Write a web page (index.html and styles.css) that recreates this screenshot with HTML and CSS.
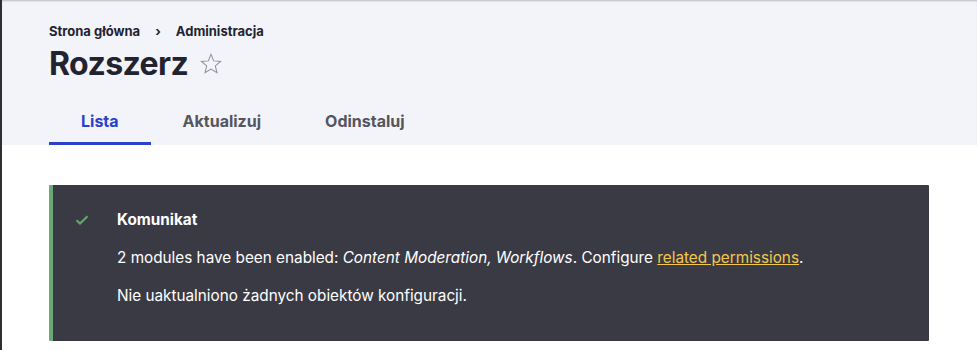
FILE: index.html
```html
<!DOCTYPE html>
<html lang="pl">
<head>
  <meta charset="UTF-8">
  <meta name="viewport" content="width=device-width, initial-scale=1.0">
  <title>Rozszerz</title>
  <link rel="stylesheet" href="styles.css">
</head>
<body>
  <!-- Page header -->
  <header class="page-header">
    <nav class="breadcrumb">
      <a href="#">Strona główna</a>
      <span class="sep">›</span>
      <a href="#">Administracja</a>
    </nav>
    <div class="title-row">
      <h1>Rozszerz</h1>
      <button class="star-btn" aria-label="Dodaj do skrótów">
        <svg width="22" height="22" viewBox="0 0 24 24">
          <polygon points="12,1.5 14.9,8.6 22.5,9.2 16.7,14.1 18.5,21.6 12,17.6 5.5,21.6 7.3,14.1 1.5,9.2 9.1,8.6" fill="none" stroke="#8e9099" stroke-width="1.1" stroke-linejoin="miter"/>
        </svg>
      </button>
    </div>
    <ul class="tabs">
      <li class="tab active"><a href="#">Lista</a></li>
      <li class="tab"><a href="#">Aktualizuj</a></li>
      <li class="tab"><a href="#">Odinstaluj</a></li>
    </ul>
  </header>

  <!-- Messages -->
  <main class="content">
    <div class="message status">
      <svg class="msg-icon" width="14" height="10" viewBox="0 0 14 10">
        <path d="M1.5 5.2 L5 8.5 L12.5 1.2" fill="none" stroke="#5ea86c" stroke-width="2.2"/>
      </svg>
      <div class="msg-body">
        <h2 class="msg-title">Komunikat</h2>
        <p>2 modules have been enabled: <em>Content Moderation, Workflows</em>. Configure <a href="#">related permissions</a>.</p>
        <p>Nie uaktualniono żadnych obiektów konfiguracji.</p>
      </div>
    </div>
  </main>
</body>
</html>
```

FILE: styles.css
```css
/* General */
body {
  margin: 0;
  font-family: Inter, "Noto Sans", sans-serif;
  color: #222330;
  background: #fff;
  border-left: 2px solid #2f2f33;
  min-height: 350px;
  box-sizing: border-box;
}

a {
  color: inherit;
  text-decoration: none;
}

/* Header */
.page-header {
  background: #f3f4f9;
  padding: 22px 48px 0 47px;
  box-shadow: inset 0 2px 2px -1px #b9bac0;
}

.breadcrumb {
  font-size: 13px;
  font-weight: 700;
  line-height: 18px;
  display: flex;
  gap: 15px;
}

.title-row {
  display: flex;
  align-items: center;
  gap: 12px;
  margin-top: 4px;
}

h1 {
  margin: 0;
  font-size: 32px;
  line-height: 40px;
  font-weight: 700;
  letter-spacing: -0.6px;
}

.star-btn {
  background: none;
  border: none;
  padding: 0;
  display: flex;
  cursor: pointer;
}

.tabs {
  list-style: none;
  margin: 17px 0 0;
  padding: 0;
  display: flex;
}

.tab a {
  display: block;
  padding: 10px 32px 11px;
  font-size: 16px;
  font-weight: 700;
  line-height: 20px;
  color: #545560;
  border-bottom: 3px solid transparent;
}

.tab.active a {
  color: #2941cc;
  border-bottom-color: #2941cc;
}

/* Content */
.content {
  padding: 40px 48px 12px 47px;
}

.message {
  display: flex;
  background: #3a3a44;
  color: #fff;
  border-left: 4px solid #6aa874;
  border-radius: 1px;
  padding: 25px 24px 25px 20px;
}

.msg-icon {
  flex: none;
  margin: 5px 28px 0 2px;
}

.msg-title {
  margin: 0 0 18px;
  font-size: 15.3px;
  line-height: 20px;
  font-weight: 700;
}

.msg-body p {
  margin: 0 0 18px;
  font-size: 15.3px;
  line-height: 20px;
}

.msg-body p:last-child {
  margin-bottom: 10px;
}

.msg-body a {
  color: #f2c94c;
  text-decoration: underline;
}
```
